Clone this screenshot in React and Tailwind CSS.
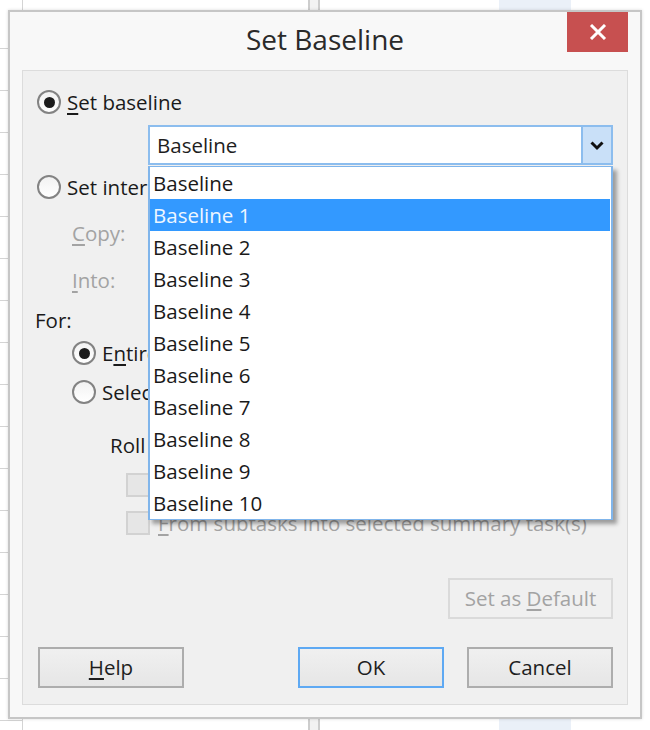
import React from 'react';

const Radio = ({ checked }) => (
  <div className="w-6 h-6 rounded-full border-2 border-[#838383] bg-gradient-to-b from-[#f2f2f2] to-white flex items-center justify-center shrink-0">
    {checked && <div className="w-[11px] h-[11px] rounded-full bg-[#1c1c1c]" />}
  </div>
);

const Check = () => (
  <div className="w-6 h-6 border-2 border-[#d2d2d2] bg-[#e6e6e6] shrink-0" />
);

const U = ({ children }) => <span className="underline underline-offset-[3px] decoration-[1.5px]">{children}</span>;

const Chevron = () => (
  <svg width="16" height="12" viewBox="0 0 16 12">
    <path d="M2.5 3.5 L8 9 L13.5 3.5" fill="none" stroke="#111" strokeWidth="3" />
  </svg>
);

const Combo = ({ value, disabled }) => (
  <div className={`flex-1 h-10 flex border-2 ${disabled ? 'border-[#d9d9d9] bg-[#f0f0f0]' : 'border-[#8cbdee] bg-white'}`}>
    <div className="flex-1 flex items-center pl-[7px] text-[20.5px] text-[#1e1e1e]">{value}</div>
    <div className={`w-[30px] flex items-center justify-center border-l-2 ${disabled ? 'border-[#e0e0e0]' : 'border-[#8cbdee] bg-[#c9e0f8]'}`}>
      {!disabled && <Chevron />}
    </div>
  </div>
);

const Button = ({ children, primary, disabled, className = '' }) => (
  <div
    className={`w-[146px] h-[41px] flex items-center justify-center text-[20.5px] border-2 ${
      disabled
        ? 'border-[#dadada] bg-[#f0f0f0] text-[#a3a3a3]'
        : primary
        ? 'border-[#5ea9f3] bg-gradient-to-b from-[#f0f0f0] to-[#e6e6e6] text-[#1e1e1e]'
        : 'border-[#adadad] bg-gradient-to-b from-[#f0f0f0] to-[#e6e6e6] text-[#1e1e1e]'
    } ${className}`}
  >
    <span>{children}</span>
  </div>
);

const items = ['Baseline', 'Baseline 1', 'Baseline 2', 'Baseline 3', 'Baseline 4', 'Baseline 5', 'Baseline 6', 'Baseline 7', 'Baseline 8', 'Baseline 9', 'Baseline 10'];

export default function App() {
  const gridRows = Array.from({ length: 17 }, (_, i) => 48 + i * 42);

  return (
    <div className="relative w-[650px] h-[730px] bg-white overflow-hidden font-['Open_Sans',sans-serif]">
      {/* spreadsheet behind the dialog */}
      <div className="absolute inset-0">
        {gridRows.map((y) => (
          <div key={y} className="absolute left-0 w-[22px] h-px bg-[#d4d4d4]" style={{ top: y }} />
        ))}
        <div className="absolute left-[22px] top-0 bottom-0 w-px bg-[#d4d4d4]" />
        <div className="absolute left-[308px] top-0 bottom-0 w-[12px] bg-[#f2f2f2] border-x-2 border-[#cdcdcd]" />
        <div className="absolute left-[499px] top-0 bottom-0 w-[72px] bg-[#eaf0f8]" />
      </div>

      {/* dialog window */}
      <div className="absolute left-[8px] top-[10px] w-[634px] h-[709px] border-2 border-[#c6c6c6] bg-[#f8f8f8] flex flex-col px-3 pb-3 shadow-[0_0_3px_rgba(0,0,0,0.15)]">
        <div className="relative h-[58px] shrink-0 flex items-center justify-center">
          <div className="text-[28px] text-[#2a2a2a] -mt-[4px]">Set Baseline</div>
          <div className="absolute right-0 top-0 w-[61px] h-[40px] bg-[#c75050] flex items-center justify-center">
            <svg width="18" height="16" viewBox="0 0 18 16">
              <path d="M2 1 L16 15 M16 1 L2 15" stroke="white" strokeWidth="3" />
            </svg>
          </div>
        </div>

        <div className="relative flex-1 border border-[#dcdcdc] bg-[#f0f0f0] flex flex-col text-[20.5px] text-[#1a1a1a]">
          <div className="mt-[17px] h-7 ml-[14px] flex items-center gap-[6px]">
            <Radio checked />
            <span><U>S</U>et baseline</span>
          </div>
          <div className="mt-[9px] ml-[125px] mr-[14px] flex">
            <Combo value="Baseline" />
          </div>
          <div className="mt-2 h-7 ml-[14px] flex items-center gap-[6px]">
            <Radio />
            <span>Set interim plan</span>
          </div>
          <div className="mt-3 h-10 ml-[49px] mr-[14px] flex items-center text-[#a3a3a3]">
            <span className="w-[76px]"><U>C</U>opy:</span>
            <Combo disabled />
          </div>
          <div className="mt-[7px] h-10 ml-[49px] mr-[14px] flex items-center text-[#a3a3a3]">
            <span className="w-[76px]"><U>I</U>nto:</span>
            <Combo disabled />
          </div>
          <div className="mt-[6px] h-7 ml-3 flex items-center">For:</div>
          <div className="mt-[5px] h-7 ml-[49px] flex items-center gap-[6px]">
            <Radio checked />
            <span>E<U>n</U>tire project</span>
          </div>
          <div className="mt-[11px] h-7 ml-[49px] flex items-center gap-[6px]">
            <Radio />
            <span>Selecte<U>d</U> tasks</span>
          </div>
          <div className="mt-[25px] h-7 ml-[87px] flex items-center">Roll up baselines:</div>
          <div className="mt-3 h-7 ml-[103px] flex items-center gap-2 text-[#a3a3a3]">
            <Check />
            <span><U>T</U>o all summary tasks</span>
          </div>
          <div className="mt-[10px] h-7 ml-[103px] flex items-center gap-2 text-[#a3a3a3]">
            <Check />
            <span><U>F</U>rom subtasks into selected summary task(s)</span>
          </div>
          <div className="mt-[41px] mr-[14px] flex justify-end">
            <Button disabled className="w-[165px]">Set as <U>D</U>efault</Button>
          </div>
          <div className="mt-[28px] ml-[15px] mr-[14px] flex justify-between">
            <Button><U>H</U>elp</Button>
            <div className="flex gap-[23px]">
              <Button primary>OK</Button>
              <Button>Cancel</Button>
            </div>
          </div>

          {/* open dropdown list */}
          <div className="absolute left-[125px] top-[95px] w-[465px] border-x-2 border-y border-[#80b5eb] bg-white shadow-[4px_4px_4px_rgba(0,0,0,0.35)]">
            {items.map((it, i) => (
              <div
                key={it}
                className={`h-8 flex items-center pl-[3px] text-[20.5px] ${i === 1 ? 'bg-[#3399ff] text-[#eef6ff] mr-px' : 'text-[#1a1a1a]'}`}
              >
                {it}
              </div>
            ))}
          </div>
        </div>
      </div>
    </div>
  );
}
